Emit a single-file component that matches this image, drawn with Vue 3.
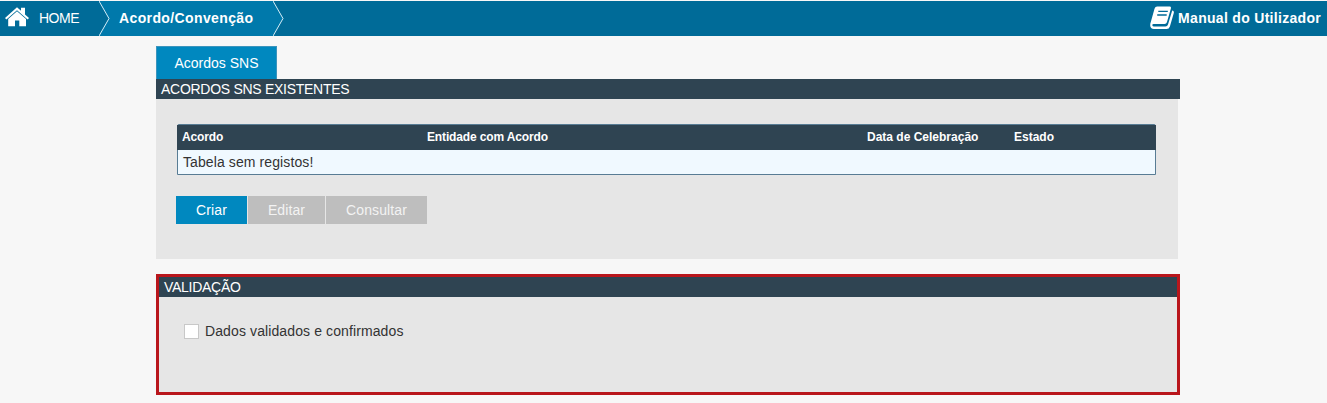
<script setup>
const columns = ['Acordo', 'Entidade com Acordo', 'Data de Celebração', 'Estado']
</script>

<template>
  <div class="page">
    <header class="topbar">
      <a class="home">
        <svg class="home-icon" viewBox="0 0 24 20" width="24" height="20">
          <path d="M12 0.2 L16 3.8 V0.8 H20 V7.4 L24 11 L22.6 12.4 L12 3.2 L1.4 12.4 L0 11 Z" />
          <path d="M12 4.2 L21 12 V19.2 H14.3 V13.6 H10 V19.2 H3.2 V12 Z" />
        </svg>
        <span class="home-label">HOME</span>
      </a>
      <svg class="chevron first" viewBox="0 0 11 35" width="11" height="35">
        <path class="fill" d="M0 0 H11 V35 H0 L10 17.5 Z" />
        <path class="line" d="M0 0 L10 17.5 L0 35" />
      </svg>
      <a class="crumb">Acordo/Convenção</a>
      <svg class="chevron" viewBox="0 0 11 35" width="11" height="35">
        <path class="fill" d="M0 0 L10 17.5 L0 35 Z" />
        <path class="line" d="M0 0 L10 17.5 L0 35" />
      </svg>
      <a class="manual">
        <svg class="book" viewBox="0 0 24 24" width="24" height="24">
          <path class="cover" d="M7.2 0.6 H19.6 Q21.4 0.6 20.9 2.4 L16.9 16.3 Q16.4 18 14.6 18 H3.6 Q2 18.2 2.4 19.4 Q2.7 20.4 4 20.4 H15.4 Q17.4 20.4 18 18.4 L22.2 4.6 Q24.4 5 23.8 7 L19.9 20.4 Q19.1 23 16.6 23 H4 Q0.2 22.8 0.2 19.2 Q0.2 17.6 0.8 16 L4.5 2.8 Q5.2 0.6 7.2 0.6 Z" />
          <path class="rule" d="M8.3 5.4 H17.8 M7.2 9 H16.7" />
        </svg>
        <span>Manual do Utilizador</span>
      </a>
    </header>

    <main class="content">
      <div class="tab">Acordos SNS</div>
      <section class="panel">
        <h2 class="title">ACORDOS SNS EXISTENTES</h2>
        <div class="body">
          <div class="table">
            <div class="row head">
              <span v-for="c in columns" :key="c">{{ c }}</span>
            </div>
            <div class="empty">Tabela sem registos!</div>
          </div>
          <div class="actions">
            <button class="btn primary">Criar</button>
            <button class="btn edit">Editar</button>
            <button class="btn view">Consultar</button>
          </div>
        </div>
      </section>

      <section class="validation">
        <h2 class="title">VALIDAÇÃO</h2>
        <label class="check"><span class="box"></span><span>Dados validados e confirmados</span></label>
      </section>
    </main>
  </div>
</template>

<style>
body { background: #f7f7f7; }
</style>

<style scoped>
.page {
  box-sizing: border-box;
  height: 403px;
  padding-top: 1px;
  overflow: hidden;
  background: #f7f7f7;
  color: #333;
  font: 14px/20px "Liberation Sans", Arial, sans-serif;
}
.topbar {
  display: flex;
  height: 35px;
  background: #006b98;
  color: #fff;
  line-height: 35px;
}
.home { display: flex; width: 99px; }
.home-icon { margin: 6px 0 0 5px; fill: #fff; }
.home-label { margin-left: 10px; letter-spacing: -0.5px; }
.chevron { flex: none; }
.chevron .fill { fill: #0079ab; }
.chevron .line { fill: none; stroke: #d5edf7; stroke-width: 1; }
.crumb {
  box-sizing: border-box;
  width: 163px;
  padding-left: 9px;
  background: #0079ab;
  font-weight: bold;
  letter-spacing: 0.38px;
  white-space: nowrap;
}
.manual {
  display: flex;
  margin-left: auto;
  padding-right: 6px;
  font-weight: bold;
  letter-spacing: 0.3px;
}
.book { margin: 5px 4px 0 0; }
.cover { fill: #fff; }
.rule { fill: none; stroke: #006b98; stroke-width: 1.4; }
.content { width: 1024px; margin: 10px 0 0 156px; }
.tab {
  box-sizing: border-box;
  width: 121px;
  height: 33px;
  border: 1px solid #3b94bd;
  border-bottom: 0;
  background: #0088bf;
  color: #fff;
  line-height: 33px;
  text-align: center;
}
.title {
  height: 20px;
  margin: 0;
  padding-left: 5px;
  background: #2f4452;
  color: #fff;
  font-size: 14px;
  font-weight: normal;
  letter-spacing: -0.28px;
  line-height: 20px;
}
.body {
  box-sizing: border-box;
  width: 1022px;
  height: 160px;
  padding: 25px 22px 0 20px;
  background: #e6e6e6;
}
.table {
  box-sizing: border-box;
  height: 51px;
  margin-left: 1px;
  border: 1px solid #587c94;
  border-radius: 2px 2px 0 0;
  background: #f0f9ff;
}
.row {
  display: grid;
  grid-template-columns: 245px 440px 147px 1fr;
  height: 25px;
  margin: 0 -1px;
  padding-left: 5px;
  background: #2f4452;
  color: #fff;
  font-size: 12px;
  font-weight: bold;
  line-height: 24px;
}
.row span:nth-child(-n + 2) { letter-spacing: -0.14px; }
.empty { padding-left: 5px; letter-spacing: 0.1px; line-height: 24px; }
.actions { display: flex; gap: 1px; margin-top: 21px; }
.btn {
  height: 28px;
  padding: 0;
  border: 0;
  background: #bebebe;
  color: #f3f3f3;
  font: inherit;
  letter-spacing: 0.1px;
  line-height: 28px;
}
.primary { width: 71px; background: #0088bf; color: #fff; }
.edit { width: 77px; }
.view { width: 101px; }
.validation {
  box-sizing: border-box;
  height: 121px;
  margin-top: 15px;
  border: 3px solid #b9161c;
  background: #e6e6e6;
}
.check {
  display: flex;
  align-items: center;
  margin: 24px 0 0 25px;
  letter-spacing: 0.11px;
}
.box {
  box-sizing: border-box;
  width: 15px;
  height: 15px;
  margin-right: 6px;
  border: 1px solid #c8c8c8;
  background: #fff;
}
</style>
